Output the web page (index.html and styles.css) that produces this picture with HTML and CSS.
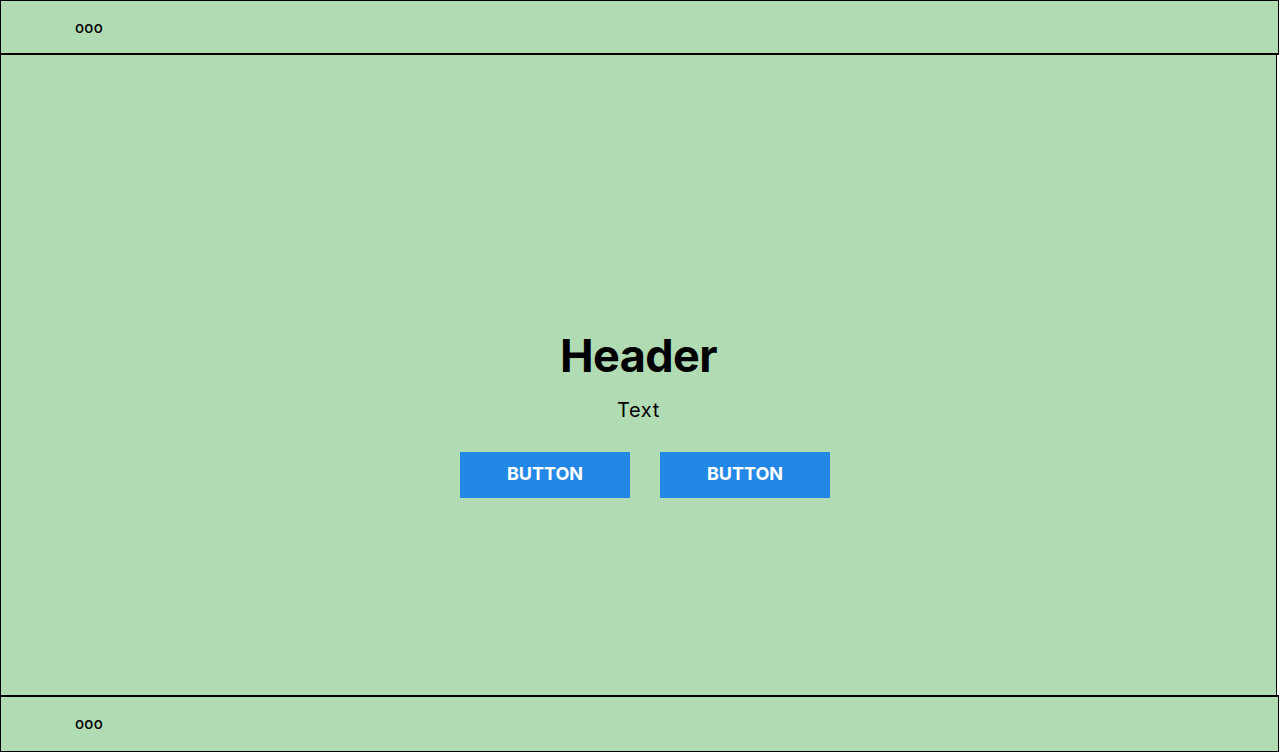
FILE: index.html
```html
<!DOCTYPE html>
<html>
<head>
<meta charset="utf-8">
<link rel="stylesheet" href="styles.css">
</head>
<body>
<header class="bar bar-top"><span class="dots">ooo</span></header>
<main class="hero">
  <h1 class="title">Header</h1>
  <p class="text">Text</p>
  <div class="actions">
    <button class="btn">BUTTON</button>
    <button class="btn">BUTTON</button>
  </div>
</main>
<footer class="bar bar-bottom"><span class="dots">ooo</span></footer>
</body>
</html>
```
FILE: styles.css
```css
* { box-sizing: border-box; }
html, body { margin: 0; padding: 0; background: #ffffff; }
body { font-family: Inter, "Liberation Sans", sans-serif; color: #000; width: 1280px; height: 752px; overflow: hidden; }
.bar {
  background: #b0dbb3;
  border: 1px solid #000;
  width: 1279px;
  display: flex;
  align-items: center;
  padding-left: 74px;
}
.bar-top { height: 55px; border-bottom-width: 2px; }
.bar-bottom { height: 57px; border-top-width: 2px; padding-bottom: 2px; }
.dots { font-size: 15px; font-weight: 500; letter-spacing: 0.3px; line-height: 1; }
.hero {
  background: #b0dbb3;
  width: 1277px;
  height: 640px;
  border-left: 1px solid #000;
  border-right: 1px solid #000;
  display: flex;
  flex-direction: column;
  align-items: center;
  padding-top: 272px;
}
.title { margin: 0; font-size: 45px; font-weight: 700; line-height: 58px; letter-spacing: -0.6px; }
.text { margin: 13px 0 0; font-size: 20px; line-height: 24px; letter-spacing: 0.6px; }
.actions { display: flex; gap: 30px; margin-top: 30px; margin-left: 13px; }
.btn {
  width: 170px;
  height: 46px;
  border: none;
  background: #2387e5;
  color: #fff;
  font-family: Inter, "Liberation Sans", sans-serif;
  font-weight: 700;
  font-size: 18px;
  padding: 0 0 3px;
}
```
